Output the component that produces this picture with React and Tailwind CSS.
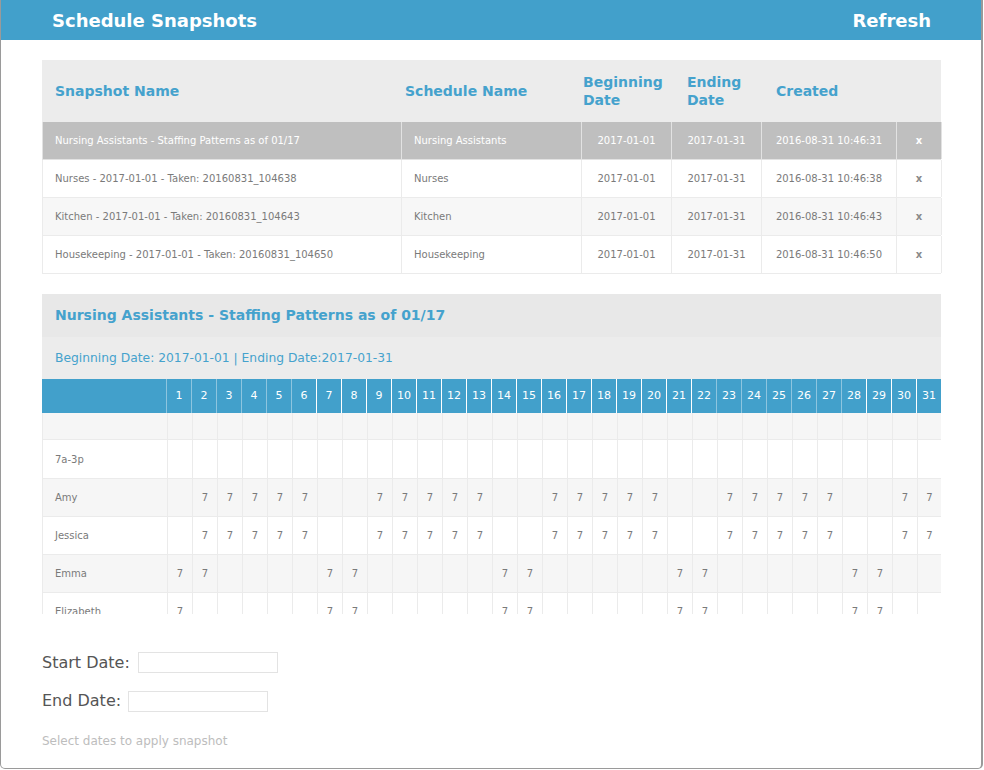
// Schedule Snapshots — modal con tabla de snapshots y vista previa del patrón

const snapshots = [
  { name: 'Nursing Assistants - Staffing Patterns as of 01/17', schedule: 'Nursing Assistants', begin: '2017-01-01', end: '2017-01-31', created: '2016-08-31 10:46:31' },
  { name: 'Nurses - 2017-01-01 - Taken: 20160831_104638', schedule: 'Nurses', begin: '2017-01-01', end: '2017-01-31', created: '2016-08-31 10:46:38' },
  { name: 'Kitchen - 2017-01-01 - Taken: 20160831_104643', schedule: 'Kitchen', begin: '2017-01-01', end: '2017-01-31', created: '2016-08-31 10:46:43' },
  { name: 'Housekeeping - 2017-01-01 - Taken: 20160831_104650', schedule: 'Housekeeping', begin: '2017-01-01', end: '2017-01-31', created: '2016-08-31 10:46:50' },
];

const days = Array.from({ length: 31 }, (_, i) => i + 1);

const weekdays = [2, 3, 4, 5, 6, 9, 10, 11, 12, 13, 16, 17, 18, 19, 20, 23, 24, 25, 26, 27, 30, 31];
const weekends = [1, 2, 7, 8, 14, 15, 21, 22, 28, 29];

const rows = [
  { label: '', days: [], h: 'h-[27px]' },
  { label: '7a-3p', days: [], h: 'h-[39px]' },
  { label: 'Amy', days: weekdays, h: 'h-[38px]' },
  { label: 'Jessica', days: weekdays, h: 'h-[38px]' },
  { label: 'Emma', days: weekends, h: 'h-[38px]' },
  { label: 'Elizabeth', days: [1, 7, 8, 14, 15, 21, 22, 28, 29], h: 'h-[38px]' },
];

const cols = 'grid grid-cols-[359px_180px_90px_90px_135px_45px]';
const dayCols = 'grid grid-cols-[124px_repeat(31,25px)]';

function SnapshotTable() {
  return (
    <div className="w-[899px]">
      {/* Cabecera */}
      <div className={`${cols} h-[62px] bg-[#ececec] text-[14px] font-bold leading-[18px] text-[#45a2cd]`}>
        <div className="flex items-center pl-[13px]">Snapshot Name</div>
        <div className="flex items-center pl-[4px]">Schedule Name</div>
        <div className="flex items-center pl-[2px]">Beginning<br />Date</div>
        <div className="flex items-center pl-[16px]">Ending<br />Date</div>
        <div className="flex items-center pl-[15px]">Created</div>
        <div />
      </div>

      {snapshots.map((s, i) => {
        const selected = i === 0;
        const bg = selected ? 'bg-[#bfbfbf] text-white' : i % 2 === 0 ? 'bg-[#f7f7f7] text-[#7a7a7a]' : 'bg-white text-[#7a7a7a]';
        const line = selected ? 'border-[#e2e2e2]' : 'border-[#ebebeb]';
        return (
          <div key={s.name} className={`${cols} h-[38px] text-[10px] border-l border-b ${line} ${bg}`}>
            <div className={`flex items-center pl-[12px] border-r ${line}`}>{s.name}</div>
            <div className={`flex items-center pl-[12px] border-r ${line}`}>{s.schedule}</div>
            <div className={`flex items-center justify-center border-r ${line}`}>{s.begin}</div>
            <div className={`flex items-center justify-center border-r ${line}`}>{s.end}</div>
            <div className={`flex items-center justify-center border-r ${line}`}>{s.created}</div>
            <div className={`flex items-center justify-center font-bold border-r ${line} ${selected ? 'text-white' : 'text-[#8a8a8a]'}`}>x</div>
          </div>
        );
      })}
    </div>
  );
}

function PatternPreview() {
  return (
    <div className="w-[899px] mt-[20px]">
      <div className="h-[43px] bg-[#e8e8e8] flex items-center pl-[13px] text-[14px] font-bold text-[#45a2cd]">
        Nursing Assistants - Staffing Patterns as of 01/17
      </div>
      <div className="h-[42px] bg-[#ececec] flex items-center pl-[13px] text-[12.3px] text-[#45a2cd]">
        Beginning Date: 2017-01-01 | Ending Date:2017-01-31
      </div>

      <div className="h-[235px] overflow-hidden">
        <div className={`${dayCols} h-[34px] bg-[#42a0cb] text-white text-[11px]`}>
          <div />
          {days.map((d) => (
            <div
              key={d}
              className={`flex items-center justify-center border-l ${d <= 6 || (d >= 23 && d <= 28) ? 'border-[#8dc5df]' : 'border-white'}`}
            >
              {d}
            </div>
          ))}
        </div>
        {rows.map((r, i) => (
          <div
            key={i}
            className={`${dayCols} ${r.h} border-b border-l border-[#ebebeb] text-[10px] text-[#7a7a7a] ${i % 2 === 0 ? 'bg-[#f6f6f6]' : 'bg-white'}`}
          >
            <div className="flex items-center pl-[12px]">{r.label}</div>
            {days.map((d) => (
              <div key={d} className="flex items-center justify-center border-l border-[#ebebeb] last:border-r">
                {r.days.includes(d) ? '7' : ''}
              </div>
            ))}
          </div>
        ))}
      </div>
    </div>
  );
}

export default function App() {
  return (
    <div className="w-[984px] h-[770px] bg-white font-['DejaVu_Sans',sans-serif]">
      <div className="w-[983px] h-[769px] flex flex-col border-l border-r-2 border-b border-[#9a9a9a] rounded-b-[5px] overflow-hidden bg-white">
        <header className="h-[40px] shrink-0 bg-[#42a0cb] flex items-center justify-between pl-[51px] pr-[50px] text-white text-[18px] font-bold">
          <span>Schedule Snapshots</span>
          <span>Refresh</span>
        </header>

        <main className="pl-[41px] pt-[20px]">
          <SnapshotTable />
          <PatternPreview />

          {/* Fechas para aplicar */}
          <div className="mt-[38px] flex items-center h-[21px] text-[16px] text-[#555]">
            <span>Start Date:</span>
            <input className="ml-[8px] w-[140px] h-[21px] border border-[#e3e3e3] bg-white" />
          </div>
          <div className="mt-[17px] flex items-center h-[22px] text-[16px] text-[#555]">
            <span>End Date:</span>
            <input className="ml-[7px] w-[140px] h-[21px] border border-[#e3e3e3] bg-white" />
          </div>
          <p className="mt-[20px] text-[12px] text-[#bdbdbd]">Select dates to apply snapshot</p>
        </main>
      </div>
    </div>
  );
}
